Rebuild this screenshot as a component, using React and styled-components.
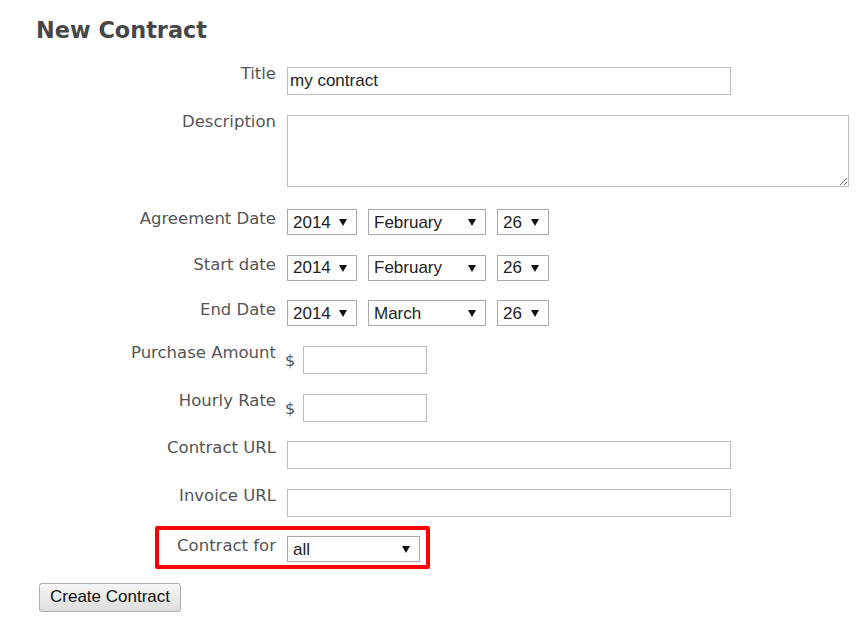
import styled, { createGlobalStyle } from "styled-components";

const GlobalStyle = createGlobalStyle`
  body {
    margin: 0;
    background: #ffffff;
  }
`;

const Page = styled.div`
  padding: 17px 10px 0 36px;
`;

const Heading = styled.h1`
  margin: 0 0 24px 0;
  font-family: "DejaVu Sans", Verdana, sans-serif;
  font-weight: 700;
  font-size: 22.4px;
  line-height: 26px;
  color: #474747;
`;

const Form = styled.form`
  display: flex;
  flex-direction: column;
  gap: 19.6px;
`;

const Row = styled.div`
  position: relative;
  display: flex;
  align-items: flex-start;
  gap: 11px;
`;

const Label = styled.label`
  flex: 0 0 240px;
  margin-top: ${(p) => (p.$select ? "0" : "-3px")};
  text-align: right;
  font-family: "DejaVu Sans", Verdana, sans-serif;
  font-size: 16.5px;
  line-height: 20px;
  color: #555555;
`;

const Fields = styled.div`
  display: flex;
  align-items: center;
  flex-shrink: 0;
  gap: ${(p) => p.$gap || "11px"};
`;

const Input = styled.input`
  box-sizing: border-box;
  flex-shrink: 0;
  width: ${(p) => p.$width || "444px"};
  height: 28px;
  margin: 0;
  padding: 0 2px;
  border: 1px solid #bdbdbd;
  border-radius: 0;
  font-family: "Liberation Sans", Arial, sans-serif;
  font-size: 17px;
  color: #222222;
  outline: none;
`;

const TextArea = styled.textarea`
  box-sizing: border-box;
  display: block;
  flex-shrink: 0;
  width: 562px;
  height: 72px;
  margin: 0 0 3px 0;
  padding: 2px;
  border: 1px solid #bdbdbd;
  border-radius: 0;
  font-family: "Liberation Sans", Arial, sans-serif;
  font-size: 17px;
  outline: none;
`;

const Dollar = styled.span`
  font-family: "DejaVu Sans", Verdana, sans-serif;
  font-size: 16px;
  line-height: 20px;
  color: #555555;
  padding-top: 2px;
  margin-left: -2px;
`;

const SelectWrap = styled.div`
  position: relative;
  flex-shrink: 0;
  width: ${(p) => p.$width};
  height: 26px;
`;

const Select = styled.select`
  box-sizing: border-box;
  width: 100%;
  height: 100%;
  margin: 0;
  padding: 0 0 0 5px;
  appearance: none;
  -webkit-appearance: none;
  background: #ffffff;
  border: 1px solid #a9a9a9;
  border-radius: 0;
  font-family: "Liberation Sans", Arial, sans-serif;
  font-size: 17px;
  color: #222222;
  outline: none;
`;

const Arrow = styled.span`
  position: absolute;
  right: 10px;
  top: 10px;
  width: 0;
  height: 0;
  border-left: 4px solid transparent;
  border-right: 4px solid transparent;
  border-top: 7px solid #111111;
  pointer-events: none;
`;

const Highlight = styled.div`
  position: absolute;
  left: 119px;
  top: -10px;
  width: 275px;
  height: 43px;
  box-sizing: border-box;
  border: 4px solid #ff0000;
  border-radius: 2px;
  pointer-events: none;
`;

const Button = styled.button`
  align-self: flex-start;
  margin: 1px 0 0 3px;
  width: 142px;
  height: 29px;
  padding: 0;
  border: 1px solid #adadad;
  border-radius: 3px;
  background: linear-gradient(#f7f7f7, #dddddd);
  font-family: "Liberation Sans", Arial, sans-serif;
  font-size: 17px;
  color: #111111;
  cursor: pointer;
`;

const years = ["2013", "2014", "2015"];
const months = [
  "January",
  "February",
  "March",
  "April",
  "May",
  "June",
  "July",
  "August",
  "September",
  "October",
  "November",
  "December",
];
const days = Array.from({ length: 31 }, (_, i) => String(i + 1));

function Dropdown({ width, value, options }) {
  return (
    <SelectWrap $width={width}>
      <Select defaultValue={value}>
        {options.map((o) => (
          <option key={o}>{o}</option>
        ))}
      </Select>
      <Arrow />
    </SelectWrap>
  );
}

function DateRow({ label, month }) {
  return (
    <Row>
      <Label $select>{label}</Label>
      <Fields>
        <Dropdown width="70px" value="2014" options={years} />
        <Dropdown width="118px" value={month} options={months} />
        <Dropdown width="52px" value="26" options={days} />
      </Fields>
    </Row>
  );
}

export default function App() {
  return (
    <Page>
      <GlobalStyle />
      <Heading>New Contract</Heading>
      <Form onSubmit={(e) => e.preventDefault()}>
        <Row>
          <Label>Title</Label>
          <Input defaultValue="my contract" />
        </Row>
        <Row>
          <Label>Description</Label>
          <TextArea />
        </Row>
        <DateRow label="Agreement Date" month="February" />
        <DateRow label="Start date" month="February" />
        <DateRow label="End Date" month="March" />
        <Row>
          <Label>Purchase Amount</Label>
          <Fields $gap="8px">
            <Dollar>$</Dollar>
            <Input $width="124px" />
          </Fields>
        </Row>
        <Row>
          <Label>Hourly Rate</Label>
          <Fields $gap="8px">
            <Dollar>$</Dollar>
            <Input $width="124px" />
          </Fields>
        </Row>
        <Row>
          <Label>Contract URL</Label>
          <Input />
        </Row>
        <Row>
          <Label>Invoice URL</Label>
          <Input />
        </Row>
        <Row>
          <Highlight />
          <Label $select>Contract for</Label>
          <Dropdown width="133px" value="all" options={["all", "me"]} />
        </Row>
        <Button type="submit">Create Contract</Button>
      </Form>
    </Page>
  );
}
